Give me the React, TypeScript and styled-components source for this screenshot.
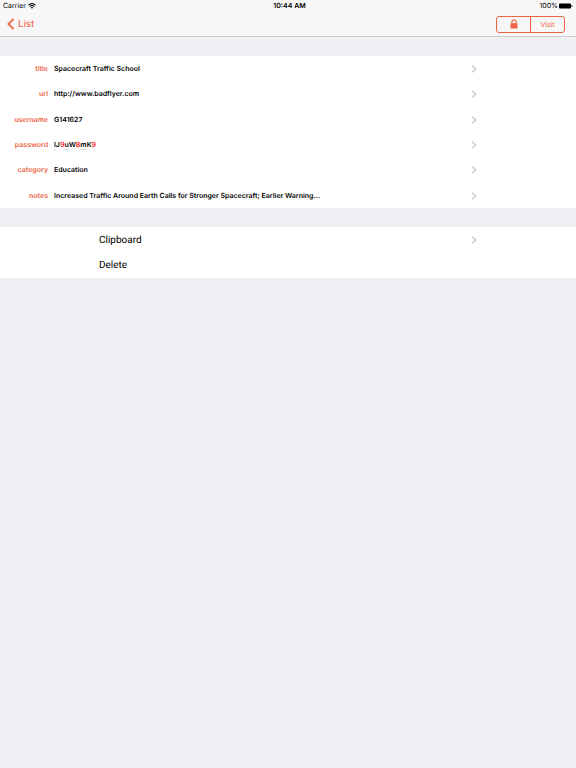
import React from 'react';
import styled, { createGlobalStyle } from 'styled-components';

const accent = '#ee6545';
const largeFont = 'Roboto, "Liberation Sans", sans-serif';

const GlobalStyle = createGlobalStyle`
  * { box-sizing: border-box; }
  body {
    margin: 0;
    background: #efeff4;
    color: #000;
    font-family: Inter, "Liberation Sans", sans-serif;
    text-rendering: geometricPrecision;
  }
  button { font-family: inherit; text-rendering: inherit; cursor: pointer; }
`;

const Page = styled.div`
  min-height: 100vh;
  background: #efeff4;
`;

const TopBar = styled.header`
  background: #f7f7f7;
  border-bottom: 1px solid #cfcfd2;
`;

const StatusBar = styled.div`
  display: grid;
  grid-template-columns: 1fr auto 1fr;
  align-items: center;
  height: 12px;
  padding: 0 3px;
  font-size: 7px;
  line-height: 12px;
`;

const StatusGroup = styled.div<{ $end?: boolean }>`
  display: flex;
  align-items: center;
  justify-content: ${(p) => (p.$end ? 'flex-end' : 'flex-start')};
  gap: ${(p) => (p.$end ? '1px' : '2px')};
`;

const Clock = styled.time`
  font-weight: 600;
  padding-left: 3px;
`;

const NavBar = styled.nav`
  display: flex;
  align-items: center;
  justify-content: space-between;
  height: 24px;
  padding: 0 11px 0 7px;
`;

const BackLink = styled.a`
  display: flex;
  align-items: center;
  gap: 3px;
  color: ${accent};
  font-family: ${largeFont};
  font-size: 10px;
  line-height: 17px;
  text-decoration: none;
`;

const Segments = styled.div`
  display: flex;
  height: 17px;
  border: 1px solid ${accent};
  border-radius: 3px;
`;

const Segment = styled.button`
  display: flex;
  align-items: center;
  justify-content: center;
  width: 33px;
  padding: 0;
  border: 0;
  background: transparent;
  color: ${accent};
  font-size: 7px;
  line-height: 15px;

  & + & {
    width: 34px;
    border-left: 1px solid ${accent};
  }
`;

const Content = styled.main`
  display: flex;
  flex-direction: column;
  gap: 19px;
  padding-top: 19px;
`;

const Group = styled.section<{ $height: number }>`
  display: grid;
  grid-auto-rows: 1fr;
  min-height: ${(p) => p.$height}px;
  background: #fff;
`;

const Row = styled.button<{ $action?: boolean }>`
  display: flex;
  align-items: center;
  gap: 6px;
  min-width: 0;
  padding: 1px 99px 0 ${(p) => (p.$action ? 99 : 0)}px;
  border: 0;
  background: transparent;
  color: #000;
  font-family: ${(p) => (p.$action ? largeFont : 'inherit')};
  font-size: ${(p) => (p.$action ? 10 : 7)}px;
  font-weight: ${(p) => (p.$action ? 400 : 600)};
  line-height: ${(p) => (p.$action ? 17 : 14)}px;
  text-align: left;
`;

const Label = styled.span`
  flex: none;
  width: 48px;
  color: ${accent};
  text-align: right;
`;

const Value = styled.span`
  flex: 1;
  overflow: hidden;
  white-space: nowrap;
  text-overflow: ellipsis;
`;

const Digit = styled.span`
  color: #ff1a1a;
`;

const Lower = styled.span`
  text-decoration: underline;
  text-decoration-color: #dcdcdc;
  text-decoration-thickness: 1px;
  text-underline-offset: 2px;
`;

const Icon = styled.svg`
  display: block;
  flex: none;
`;

const Disclosure = () => (
  <Icon width="6" height="8" viewBox="0 0 6 8" fill="none" aria-hidden="true">
    <path d="M1.2.7 4.8 4 1.2 7.3" stroke="#c7c7cc" strokeWidth="1.2" />
  </Icon>
);

const Wifi = () => (
  <Icon width="8" height="6" viewBox="0 0 8 6" fill="none" stroke="#000" aria-label="Wi-Fi">
    <path d="M.5 2.1Q4-.8 7.5 2.1" strokeWidth="1.1" />
    <path d="M1.8 3.5Q4 1.6 6.2 3.5" strokeWidth="1.1" />
    <path d="M2.8 4.4Q4 3.5 5.2 4.4L4 5.8Z" fill="#000" stroke="none" />
  </Icon>
);

const Battery = () => (
  <Icon width="14" height="6" viewBox="0 0 14 6" aria-label="Battery full">
    <rect y=".5" width="12" height="5" rx="1" />
    <path d="M12.5 2Q13.5 2 13.5 3T12.5 4Z" />
  </Icon>
);

const BackArrow = () => (
  <Icon width="8" height="12" viewBox="0 0 8 12" fill="none" aria-hidden="true">
    <path d="M6.6.8 1.4 6l5.2 5.2" stroke={accent} strokeWidth="1.8" />
  </Icon>
);

const Lock = () => (
  <Icon width="8" height="10" viewBox="0 0 8 10" aria-hidden="true">
    <path d="M2 5V2.8a2 2 0 0 1 4 0V5" fill="none" stroke={accent} strokeWidth="1.2" />
    <rect x=".5" y="4.3" width="7" height="5.2" rx=".7" fill={accent} />
  </Icon>
);

const Password = ({ text }: { text: string }) => (
  <>
    {text.split('').map((char, i) => {
      if (/[0-9]/.test(char)) return <Digit key={i}>{char}</Digit>;
      if (/[a-z]/.test(char)) return <Lower key={i}>{char}</Lower>;
      return char;
    })}
  </>
);

const fields: { label: string; value: React.ReactNode }[] = [
  { label: 'title', value: 'Spacecraft Traffic School' },
  { label: 'url', value: 'http://www.badflyer.com' },
  { label: 'username', value: 'G141627' },
  { label: 'password', value: <Password text="lJ9uW8mK9" /> },
  { label: 'category', value: 'Education' },
  { label: 'notes', value: 'Increased Traffic Around Earth Calls for Stronger Spacecraft; Earlier Warning...' },
];

export default function App() {
  return (
    <Page>
      <GlobalStyle />
      <TopBar>
        <StatusBar>
          <StatusGroup>Carrier <Wifi /></StatusGroup>
          <Clock>10:44 AM</Clock>
          <StatusGroup $end>100% <Battery /></StatusGroup>
        </StatusBar>
        <NavBar>
          <BackLink href="#list"><BackArrow />List</BackLink>
          <Segments>
            <Segment type="button" aria-label="Lock"><Lock /></Segment>
            <Segment type="button">Visit</Segment>
          </Segments>
        </NavBar>
      </TopBar>
      <Content>
        <Group $height={152}>
          {fields.map((field) => (
            <Row type="button" key={field.label}>
              <Label>{field.label}</Label>
              <Value>{field.value}</Value>
              <Disclosure />
            </Row>
          ))}
        </Group>
        <Group $height={51}>
          <Row type="button" $action><Value>Clipboard</Value><Disclosure /></Row>
          <Row type="button" $action><Value>Delete</Value></Row>
        </Group>
      </Content>
    </Page>
  );
}
